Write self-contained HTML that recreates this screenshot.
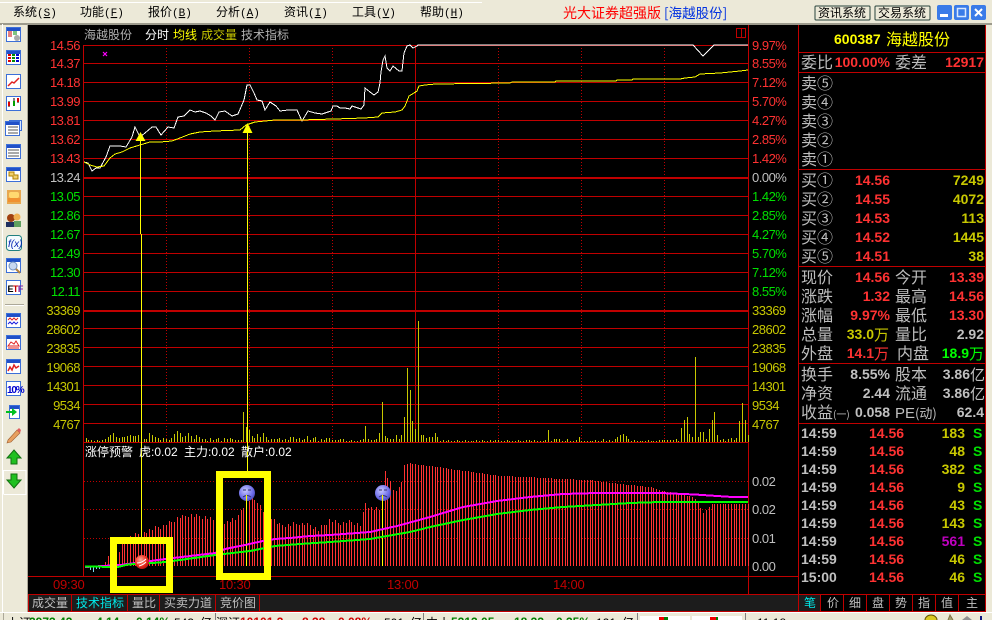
<!DOCTYPE html>
<html><head><meta charset="utf-8"><title>光大证券超强版</title>
<style>
html,body{margin:0;padding:0;width:992px;height:620px;overflow:hidden;background:#ece9d8}
svg{display:block;position:absolute;left:0;top:0}
text{font-family:"Liberation Sans","WenQuanYi Zen Hei","Noto Sans CJK SC",sans-serif;white-space:pre}
.cn{font-family:"WenQuanYi Zen Hei","Noto Sans CJK SC",sans-serif}
.ci{font-family:"Noto Sans CJK SC",sans-serif}
.ax{font-size:13px;letter-spacing:-.5px}
.lb{font-size:16px;fill:#bdbdbd;font-family:"WenQuanYi Zen Hei","Noto Sans CJK SC",sans-serif}
.nb{font-size:14px;font-weight:bold;text-anchor:end}
.tk{font-size:14px;font-weight:bold}
.r{fill:#ff3232}.y{fill:#c8c800}.g{fill:#00e000}.w{fill:#c0c0c0}.gg{fill:#00ff00}
.menu{font-size:12px;fill:#000;font-family:"WenQuanYi Zen Hei","Noto Sans CJK SC",sans-serif}
.mn{font-family:"Liberation Mono",monospace;font-size:11px}
.tab{font-size:12px;fill:#c0c0c0;font-family:"WenQuanYi Zen Hei","Noto Sans CJK SC",sans-serif}
.hd{font-size:12px;font-family:"WenQuanYi Zen Hei","Noto Sans CJK SC",sans-serif}
.st{font-size:12px;font-weight:bold}
</style></head><body>
<svg width="992" height="620" viewBox="0 0 992 620" xmlns="http://www.w3.org/2000/svg">
<defs>
<g id="box"><rect x="6.5" y="-7.5" width="14" height="14" fill="#fff" stroke="#3c6fd8"/><rect x="7" y="-7" width="13" height="3" fill="#2050c8"/></g>
</defs>
<rect width="992" height="620" fill="#ece9d8"/>
<rect x="0" y="2" width="482" height="1" fill="#fff"/>
<rect x="0" y="23" width="992" height="2" fill="#9c9a8c"/>
<rect x="27" y="24" width="1" height="590" fill="#aca899"/>
<rect x="2" y="24" width="1" height="590" fill="#fff"/>
<rect x="28" y="25" width="958" height="588" fill="#000"/>

<!-- menu -->
<text class="menu" x="13" y="16">系统<tspan class="mn">(<tspan text-decoration="underline">S</tspan>)</tspan></text>
<text class="menu" x="80" y="16">功能<tspan class="mn">(<tspan text-decoration="underline">F</tspan>)</tspan></text>
<text class="menu" x="148" y="16">报价<tspan class="mn">(<tspan text-decoration="underline">B</tspan>)</tspan></text>
<text class="menu" x="216" y="16">分析<tspan class="mn">(<tspan text-decoration="underline">A</tspan>)</tspan></text>
<text class="menu" x="284" y="16">资讯<tspan class="mn">(<tspan text-decoration="underline">I</tspan>)</tspan></text>
<text class="menu" x="352" y="16">工具<tspan class="mn">(<tspan text-decoration="underline">V</tspan>)</tspan></text>
<text class="menu" x="420" y="16">帮助<tspan class="mn">(<tspan text-decoration="underline">H</tspan>)</tspan></text>
<text class="cn" x="563" y="18" font-size="14" fill="#ff0000">光大证券超强版</text>
<text class="cn" x="664" y="18" font-size="13.5" fill="#0030e0">[海越股份]</text>
<rect x="815" y="6" width="55" height="14" rx="1" fill="#ece9d8" stroke="#27443c"/>
<rect x="875" y="6" width="55" height="14" rx="1" fill="#ece9d8" stroke="#27443c"/>
<text class="menu" x="818" y="17">资讯系统</text>
<text class="menu" x="878" y="17">交易系统</text>
<rect x="937" y="5" width="15" height="15" rx="2" fill="#3a7be8"/><rect x="940" y="14" width="8" height="3" fill="#fff"/>
<rect x="954" y="5" width="15" height="15" rx="2" fill="#3a7be8"/><rect x="957.5" y="8.5" width="8" height="8" fill="none" stroke="#d8e8ff" stroke-width="1.5"/>
<rect x="971" y="5" width="15" height="15" rx="2" fill="#3a7be8"/><path d="M975 9l7 7M982 9l-7 7" stroke="#fff" stroke-width="2"/>

<!-- toolbar icons -->
<g transform="translate(0,35)"><use href="#box"/><path d="M8 -3h4M8 -1h4M8 1h4" stroke="#c00"/><path d="M13 -3h4M13 -1h4" stroke="#080"/><circle cx="17" cy="3" r="3" fill="#aaa"/></g>
<g transform="translate(0,58)"><use href="#box"/><path d="M8 -3h3M8 0h3M8 3h3" stroke="#d00" stroke-width="2"/><path d="M12 -3h3M12 0h3M12 3h3" stroke="#080" stroke-width="2"/><path d="M16 -3h3M16 0h3M16 3h3" stroke="#00c" stroke-width="2"/></g>
<g transform="translate(0,82)"><rect x="6.5" y="-7.5" width="14" height="14" fill="#fff" stroke="#3c6fd8"/><path d="M8 4l4-4 2 1 5-5" fill="none" stroke="#e02020" stroke-width="1.5"/></g>
<g transform="translate(0,104)"><rect x="6.5" y="-7.5" width="14" height="14" fill="#fff" stroke="#3c6fd8"/><path d="M9 -3v6M14 -6v8M18 -6v5" stroke="#000"/><rect x="8" y="-2" width="2" height="4" fill="#e00000"/><rect x="13" y="-3" width="2" height="5" fill="#00a000"/><rect x="17" y="-6" width="2" height="4" fill="#e00000"/></g>
<g transform="translate(0,128)"><rect x="9.5" y="-7.5" width="12" height="10" fill="#d8e8ff" stroke="#3c6fd8"/><use href="#box" y="1" x="-1"/><path d="M8 -1h10M8 2h10M8 5h10" stroke="#555"/></g>
<g transform="translate(0,152)"><use href="#box"/><path d="M8 -2h11M8 1h11M8 4h11" stroke="#555"/></g>
<g transform="translate(0,175)"><use href="#box"/><path d="M9 -3h5v3h4v4h-5v-3h-4z" fill="#f0d070" stroke="#b08000"/></g>
<g transform="translate(0,197)"><rect x="7" y="-7" width="14" height="14" fill="#e8a850"/><rect x="9" y="-5" width="10" height="6" rx="2" fill="#ffd870"/><rect x="8" y="1" width="12" height="4" fill="#f09030"/></g>
<g transform="translate(0,220)"><circle cx="11" cy="-2" r="4" fill="#a04010"/><rect x="6" y="2" width="9" height="5" fill="#203060"/><circle cx="17" cy="-3" r="3.5" fill="#f0b050"/><rect x="14" y="1" width="7" height="6" fill="#60a060"/></g>
<g transform="translate(0,243)"><rect x="6.5" y="-7.5" width="15" height="15" rx="3" fill="#f4fbff" stroke="#208080"/><text x="8" y="4" font-size="10" font-style="italic" fill="#0020b0" font-family="Liberation Serif">f(x)</text></g>
<g transform="translate(0,266)"><use href="#box"/><circle cx="13" cy="0" r="4" fill="#c8d8f0" stroke="#7090c0"/><path d="M16 3l4 4" stroke="#b08040" stroke-width="2"/></g>
<g transform="translate(0,288)"><rect x="6.5" y="-7.5" width="14" height="14" fill="#fff" stroke="#3c6fd8"/><text x="7.5" y="4" font-size="9" font-weight="bold" fill="#000" letter-spacing="-.6">E<tspan fill="#c00000">T</tspan><tspan fill="#8020a0">F</tspan></text></g>
<rect x="5" y="304" width="19" height="1" fill="#aca899"/><rect x="5" y="305" width="19" height="1" fill="#fff"/>
<g transform="translate(0,321)"><use href="#box"/><path d="M8 -1l2-2 2 2 2-2 2 2 2-2" fill="none" stroke="#e02020"/><path d="M8 3l2-2 2 2 2-2 2 2 2-2" fill="none" stroke="#2020e0"/></g>
<g transform="translate(0,343)"><use href="#box"/><path d="M8 3l3-4 3 2 2-3 3 5z" fill="none" stroke="#e02020"/><path d="M8 5h11" stroke="#e02020"/></g>
<g transform="translate(0,367)"><use href="#box"/><path d="M8 4l2-4 2 3 2-5 2 3 3-2" fill="none" stroke="#e02020" stroke-width="1.5"/></g>
<g transform="translate(0,389)"><rect x="6.5" y="-7.5" width="14" height="14" fill="#fff" stroke="#3c6fd8"/><text x="7" y="4" font-size="10" font-weight="bold" fill="#0000d0" letter-spacing="-1.2">10%</text></g>
<g transform="translate(0,412)"><rect x="9.5" y="-6.5" width="10" height="13" fill="#fff" stroke="#3c6fd8"/><rect x="10" y="-6" width="9" height="3" fill="#2050c8"/><path d="M6 -1h6v-3l5 4-5 4v-3h-6z" fill="#00c020"/></g>
<path d="M8 440l9-10 3 3-9 9-4 1z" fill="#e8a060" stroke="#a06030" stroke-width=".6"/><path d="M17 430l3 3 1-3-2-2z" fill="#e06060"/>
<path d="M14 450l7 8h-4v6h-6v-6h-4z" fill="#20c020" stroke="#107010"/>
<path d="M3.5 494V470.5H26M3.5 494.5H26V470" fill="none" stroke="#fff" shape-rendering="crispEdges"/>
<path d="M14 488l7-8h-4v-6h-6v6h-4z" transform="translate(0,0)" fill="#20c020" stroke="#107010"/>

<!-- grid -->
<g shape-rendering="crispEdges" fill="none" stroke="#c00000">
<path d="M84 45.5H748M84 63.5H748M84 82.5H748M84 101.5H748M84 120.5H748M84 139.5H748M84 158.5H748M84 196.5H748M84 215.5H748M84 234.5H748M84 253.5H748M84 272.5H748M84 291.5H748M84 328.5H748M84 347.5H748M84 366.5H748M84 385.5H748M84 404.5H748M84 423.5H748M84 442.5H748"/>
<path d="M84 178H748M84 311H748" stroke-width="2"/>
<path d="M83.5 45V576M748.5 25V594M798.5 25V611M415.5 45V442M985.5 25V611"/>
<path d="M166.5 45V442M249.5 45V442M332.5 45V442M498.5 45V442M581.5 45V442M664.5 45V442" stroke-dasharray="1 2"/>
<path d="M84 481.5H748M84 509.5H748M84 538.5H748" stroke-dasharray="1 2"/>
<path d="M28 576.5H798M28 594.5H798M798 52.5H985M798 72.5H985M798 169.5H985M798 266.5H985M798 363.5H985M798 423.5H985"/>
</g>

<!-- tabs -->
<rect x="29" y="595" width="769" height="16" fill="#1c1c1c"/>
<g shape-rendering="crispEdges" fill="none" stroke="#c00000">
<path d="M28.5 594V611M71.5 594V611M127.5 594V611M159.5 594V611M215.5 594V611M259.5 594V611M28 611.5H986M798 594.5H986M820.5 594V611M843.5 594V611M866.5 594V611M889.5 594V611M912.5 594V611M935.5 594V611M958.5 594V611"/>
</g>
<rect x="799" y="595" width="21" height="16" fill="#1c1c1c"/>
<text class="tab" x="32" y="607">成交量</text>
<text class="tab" x="76" y="607" style="fill:#00e8e8">技术指标</text>
<text class="tab" x="132" y="607">量比</text>
<text class="tab" x="164" y="607">买卖力道</text>
<text class="tab" x="220" y="607">竞价图</text>
<text class="tab" x="804" y="607" style="fill:#00e8e8">笔</text>
<text class="tab" x="827" y="607">价</text>
<text class="tab" x="849" y="607">细</text>
<text class="tab" x="872" y="607">盘</text>
<text class="tab" x="895" y="607">势</text>
<text class="tab" x="918" y="607">指</text>
<text class="tab" x="941" y="607">值</text>
<text class="tab" x="966" y="607">主</text>

<!-- left axis -->
<g class="ax" text-anchor="end">
<text class="r" x="80" y="50">14.56</text><text class="r" x="80" y="68">14.37</text><text class="r" x="80" y="87">14.18</text><text class="r" x="80" y="106">13.99</text><text class="r" x="80" y="125">13.81</text><text class="r" x="80" y="144">13.62</text><text class="r" x="80" y="163">13.43</text>
<text class="w" x="80" y="182">13.24</text>
<text class="g" x="80" y="201">13.05</text><text class="g" x="80" y="220">12.86</text><text class="g" x="80" y="239">12.67</text><text class="g" x="80" y="258">12.49</text><text class="g" x="80" y="277">12.30</text><text class="g" x="80" y="296">12.11</text>
<text class="y" x="80" y="315">33369</text><text class="y" x="80" y="334">28602</text><text class="y" x="80" y="353">23835</text><text class="y" x="80" y="372">19068</text><text class="y" x="80" y="391">14301</text><text class="y" x="80" y="410">9534</text><text class="y" x="80" y="429">4767</text>
</g>
<!-- right axis -->
<g class="ax">
<text class="r" x="752" y="50">9.97%</text><text class="r" x="752" y="68">8.55%</text><text class="r" x="752" y="87">7.12%</text><text class="r" x="752" y="106">5.70%</text><text class="r" x="752" y="125">4.27%</text><text class="r" x="752" y="144">2.85%</text><text class="r" x="752" y="163">1.42%</text>
<text class="w" x="752" y="182">0.00%</text>
<text class="g" x="752" y="201">1.42%</text><text class="g" x="752" y="220">2.85%</text><text class="g" x="752" y="239">4.27%</text><text class="g" x="752" y="258">5.70%</text><text class="g" x="752" y="277">7.12%</text><text class="g" x="752" y="296">8.55%</text>
<text class="y" x="752" y="315">33369</text><text class="y" x="752" y="334">28602</text><text class="y" x="752" y="353">23835</text><text class="y" x="752" y="372">19068</text><text class="y" x="752" y="391">14301</text><text class="y" x="752" y="410">9534</text><text class="y" x="752" y="429">4767</text>
<text class="w" x="752" y="486">0.02</text><text class="w" x="752" y="514">0.02</text><text class="w" x="752" y="543">0.01</text><text class="w" x="752" y="571">0.00</text>
</g>

<!-- header -->
<text class="hd" x="84" y="39" fill="#b0b0b0">海越股份</text>
<text class="hd" x="145" y="39" fill="#fff">分时</text>
<text class="hd" x="173" y="39" fill="#ffff00">均线</text>
<text class="hd" x="201" y="39" fill="#c8c800">成交量</text>
<text class="hd" x="241" y="39" fill="#b0b0b0">技术指标</text>
<rect x="736.5" y="28.5" width="9" height="9" fill="none" stroke="#c00000" shape-rendering="crispEdges"/><path d="M741.5 28v10" stroke="#c00000" shape-rendering="crispEdges"/>
<path d="M103 52l4 4M107 52l-4 4" stroke="#ff00ff" stroke-width="1.2"/>

<!-- volume / indicator bars -->
<path id="vol" d="" stroke="#c8c800" fill="none" shape-rendering="crispEdges"/>
<path id="ind" d="" stroke="#ff3232" fill="none" shape-rendering="crispEdges"/>
<path d="M90.5 566v4M93.5 566v6M96.5 566v3M99.5 566v3" stroke="#80d8f0" shape-rendering="crispEdges"/>

<!-- price lines -->
<polyline fill="none" stroke="#fff" stroke-width="1" shape-rendering="crispEdges" points="84,162 88,163 92,171 96,168 100,168 106,157 110,146 120,146 126,147 132,137 135,127 140,137 145,133 152,127 156,127 161,135 168,127 174,128 178,117 184,116 190,110 195,112 200,111 206,113 211,116 215,120 219,112 225,111 232,116 238,114 244,100 247,85 250,85 254,93 257,100 262,101 265,110 270,102 276,106 280,111 288,110 297,110 302,121 308,111 315,113 322,114 331,111 333,106 337,106 340,108 345,108 350,109 352,106 358,108 361,109 364,105 365,88 370,92 374,95 378,92 380,83 381,72 383,60 385,56 387,68 390,71 393,66 399,71 402,71 404,53 407,46 410,45 413,48 417,46 418,45 693,45 703,56 714,45 748,45"/>
<polyline fill="none" stroke="#ffff00" stroke-width="1" shape-rendering="crispEdges" points="84,162 90,165 97,167 104,166 110,158 115,154 122,152 130,148 140,145 150,142 160,142 172,141 180,138 190,134 200,132 215,131 240,130 246,125 255,122 275,120 300,120 334,119 364,118 378,117 382,113 395,112 402,110 405,106 409,96 414,93 417,91 419,86 425,85 436,84 510,83 512,82 555,82 556,81 616,81 617,80 632,80 633,79 680,79 685,78 695,77 700,74 720,73 740,71 748,70"/>

<!-- arrows -->
<path d="M140.5 141V234M141.5 234V537M247.5 133V471M246.5 495V566M382.5 494V566" stroke="#ffff00" fill="none" shape-rendering="crispEdges"/>
<path d="M140.5 132l5 9h-10zM247.5 123l5 10h-10z" fill="#ffff00"/>

<!-- indicator lines -->
<polyline fill="none" stroke="#ff00ff" stroke-width="2" shape-rendering="crispEdges" points="85,567 120,565 150,561 165,559 190,556 215,553 225,549 245,545 263,541 275,539 290,538 310,536 330,535 370,532 397,526 430,517 463,507 497,501 530,497 563,494 597,493 660,493 695,494.5 732,497 748,497"/>
<polyline fill="none" stroke="#00ff00" stroke-width="2" shape-rendering="crispEdges" points="85,566.5 118,567 128,564.5 160,562.5 180,560 215,555 250,551 275,546 300,544 330,542 370,539 410,532 430,527 463,520 497,514 530,510 563,507 597,505 630,503 660,502 748,502"/>

<!-- yellow boxes -->
<g fill="none" stroke="#ffff00" stroke-width="7" shape-rendering="crispEdges">
<rect x="113.5" y="540.5" width="56" height="49"/>
<rect x="219.5" y="474.5" width="48" height="102"/>
</g>
<!-- time -->
<g font-size="13" fill="#c00000" letter-spacing="-.2"><text x="53" y="589">09:30</text><text x="219" y="589">10:30</text><text x="387" y="589">13:00</text><text x="553" y="589">14:00</text></g>
<!-- faces and ball -->
<defs><radialGradient id="fc" cx=".4" cy=".35" r=".7"><stop offset="0" stop-color="#c8c8ff"/><stop offset=".7" stop-color="#6a6ae8"/><stop offset="1" stop-color="#4848b0"/></radialGradient>
<radialGradient id="bl" cx=".4" cy=".35" r=".7"><stop offset="0" stop-color="#ffb0a0"/><stop offset=".6" stop-color="#f03020"/><stop offset="1" stop-color="#b01010"/></radialGradient></defs>
<g id="f1"><circle cx="247" cy="493" r="8" fill="url(#fc)"/><path d="M243 490h3M248 490h3M243 497q4-3 8 0" stroke="#30306a" fill="none"/><path d="M246.5 495V502" stroke="#ffff00"/></g>
<g><circle cx="383" cy="493" r="8" fill="url(#fc)"/><path d="M379 490h3M384 490h3M379 497q4-3 8 0" stroke="#30306a" fill="none"/><path d="M382.5 495V502" stroke="#ffff00"/></g>
<circle cx="142" cy="562" r="7" fill="url(#bl)"/><path d="M137 563q5 0 9-4M139 566q4-1 7-4" stroke="#fff" fill="none"/>

<!-- indicator title -->
<text class="hd" x="85" y="456" fill="#fff">涨停预警</text>
<text x="139" y="456" font-size="12" fill="#fff"><tspan class="cn">虎</tspan>:0.02</text>
<text x="184" y="456" font-size="12" fill="#fff"><tspan class="cn">主力</tspan>:0.02</text>
<text x="241" y="456" font-size="12" fill="#fff"><tspan class="cn">散户</tspan>:0.02</text>

<!-- right panel -->
<text x="834" y="44" font-size="14" font-weight="bold" fill="#ffff00">600387</text>
<text class="cn" x="886" y="45" font-size="16" fill="#ffff00">海越股份</text>
<text class="lb" x="801" y="68">委比</text><text class="nb r" x="890" y="67">100.00%</text><text class="lb" x="895" y="68">委差</text><text class="nb r" x="984" y="67">12917</text>
<text class="lb" x="801" y="89">卖<tspan class="ci">⑤</tspan></text><text class="lb" x="801" y="108">卖<tspan class="ci">④</tspan></text><text class="lb" x="801" y="127">卖<tspan class="ci">③</tspan></text><text class="lb" x="801" y="146">卖<tspan class="ci">②</tspan></text><text class="lb" x="801" y="165">卖<tspan class="ci">①</tspan></text>
<text class="lb" x="801" y="186">买<tspan class="ci">①</tspan></text><text class="nb r" x="890" y="185">14.56</text><text class="nb y" x="984" y="185">7249</text>
<text class="lb" x="801" y="205">买<tspan class="ci">②</tspan></text><text class="nb r" x="890" y="204">14.55</text><text class="nb y" x="984" y="204">4072</text>
<text class="lb" x="801" y="224">买<tspan class="ci">③</tspan></text><text class="nb r" x="890" y="223">14.53</text><text class="nb y" x="984" y="223">113</text>
<text class="lb" x="801" y="243">买<tspan class="ci">④</tspan></text><text class="nb r" x="890" y="242">14.52</text><text class="nb y" x="984" y="242">1445</text>
<text class="lb" x="801" y="262">买<tspan class="ci">⑤</tspan></text><text class="nb r" x="890" y="261">14.51</text><text class="nb y" x="984" y="261">38</text>
<text class="lb" x="801" y="283">现价</text><text class="nb r" x="890" y="282">14.56</text><text class="lb" x="895" y="283">今开</text><text class="nb r" x="984" y="282">13.39</text>
<text class="lb" x="801" y="302">涨跌</text><text class="nb r" x="890" y="301">1.32</text><text class="lb" x="895" y="302">最高</text><text class="nb r" x="984" y="301">14.56</text>
<text class="lb" x="801" y="321">涨幅</text><text class="nb r" x="890" y="320">9.97%</text><text class="lb" x="895" y="321">最低</text><text class="nb r" x="984" y="320">13.30</text>
<text class="lb" x="801" y="340">总量</text><text class="nb y" x="874" y="339">33.0</text><text class="cn" x="874" y="340" font-size="15" fill="#c8c800">万</text><text class="lb" x="895" y="340">量比</text><text class="nb w" x="984" y="339">2.92</text>
<text class="lb" x="801" y="359">外盘</text><text class="nb r" x="874" y="358">14.1</text><text class="cn" x="874" y="359" font-size="15" fill="#ff3232">万</text><text class="lb" x="897" y="359">内盘</text><text class="nb gg" x="969" y="358">18.9</text><text class="cn" x="969" y="359" font-size="15" fill="#00ff00">万</text>
<text class="lb" x="801" y="380">换手</text><text class="nb w" x="890" y="379">8.55%</text><text class="lb" x="895" y="380">股本</text><text class="nb w" x="970" y="379">3.86</text><text class="cn" x="970" y="380" font-size="15" fill="#c0c0c0">亿</text>
<text class="lb" x="801" y="399">净资</text><text class="nb w" x="890" y="398">2.44</text><text class="lb" x="895" y="399">流通</text><text class="nb w" x="970" y="398">3.86</text><text class="cn" x="970" y="399" font-size="15" fill="#c0c0c0">亿</text>
<text class="lb" x="801" y="418">收益<tspan font-size="10">(一)</tspan></text><text class="nb w" x="890" y="417">0.058</text><text x="895" y="418" font-size="15" fill="#c0c0c0">PE<tspan class="cn" font-size="13">(动)</tspan></text><text class="nb w" x="984" y="417">62.4</text>

<!-- ticks -->
<g>
<text class="tk w" x="801" y="438">14:59</text><text class="tk r" x="869" y="438">14.56</text><text class="nb y" x="965" y="438">183</text><text class="tk g" x="973" y="438">S</text>
<text class="tk w" x="801" y="456">14:59</text><text class="tk r" x="869" y="456">14.56</text><text class="nb y" x="965" y="456">48</text><text class="tk g" x="973" y="456">S</text>
<text class="tk w" x="801" y="474">14:59</text><text class="tk r" x="869" y="474">14.56</text><text class="nb y" x="965" y="474">382</text><text class="tk g" x="973" y="474">S</text>
<text class="tk w" x="801" y="492">14:59</text><text class="tk r" x="869" y="492">14.56</text><text class="nb y" x="965" y="492">9</text><text class="tk g" x="973" y="492">S</text>
<text class="tk w" x="801" y="510">14:59</text><text class="tk r" x="869" y="510">14.56</text><text class="nb y" x="965" y="510">43</text><text class="tk g" x="973" y="510">S</text>
<text class="tk w" x="801" y="528">14:59</text><text class="tk r" x="869" y="528">14.56</text><text class="nb y" x="965" y="528">143</text><text class="tk g" x="973" y="528">S</text>
<text class="tk w" x="801" y="546">14:59</text><text class="tk r" x="869" y="546">14.56</text><text class="nb" x="965" y="546" fill="#c000c0">561</text><text class="tk g" x="973" y="546">S</text>
<text class="tk w" x="801" y="564">14:59</text><text class="tk r" x="869" y="564">14.56</text><text class="nb y" x="965" y="564">46</text><text class="tk g" x="973" y="564">S</text>
<text class="tk w" x="801" y="582">15:00</text><text class="tk r" x="869" y="582">14.56</text><text class="nb y" x="965" y="582">46</text><text class="tk g" x="973" y="582">S</text>
</g>

<!-- status bar (clipped at bottom) -->
<rect x="0" y="612" width="992" height="8" fill="#ece9d8"/>
<rect x="0" y="612" width="992" height="1" fill="#fff"/>
<rect x="3" y="613" width="1" height="7" fill="#aca899"/>
<g>
<text x="7" y="627" font-size="12" fill="#000" class="cn">上证</text>
<text x="29" y="626" fill="#008000" font-size="12" font-weight="bold">2973.43</text>
<text x="92" y="626" fill="#008000" font-size="12" font-weight="bold">-4.14</text>
<text x="132" y="626" fill="#008000" font-size="12" font-weight="bold">-0.14%</text>
<text x="174" y="627" fill="#000" font-size="12">543</text><text class="cn" x="200" y="627" font-size="12" fill="#000">亿</text>
<text class="cn" x="216" y="627" font-size="12" fill="#000">深证</text>
<text x="240" y="626" fill="#d00000" font-size="12" font-weight="bold">10101.3</text>
<text x="302" y="626" fill="#d00000" font-size="12" font-weight="bold">8.38</text>
<text x="338" y="626" fill="#d00000" font-size="12" font-weight="bold">0.08%</text>
<text x="384" y="627" fill="#000" font-size="12">501</text><text class="cn" x="410" y="627" font-size="12" fill="#000">亿</text>
<text class="cn" x="426" y="627" font-size="12" fill="#000">中小</text>
<text x="451" y="626" fill="#008000" font-size="12" font-weight="bold">5213.05</text>
<text x="510" y="626" fill="#008000" font-size="12" font-weight="bold">-18.33</text>
<text x="552" y="626" fill="#008000" font-size="12" font-weight="bold">-0.35%</text>
<text x="596" y="627" fill="#000" font-size="12">121</text><text class="cn" x="622" y="627" font-size="12" fill="#000">亿</text>
<text x="757" y="627" fill="#000" font-size="12">11:18</text>
</g>
<g shape-rendering="crispEdges">
<rect x="215" y="613" width="1" height="7" fill="#808080"/><rect x="423" y="613" width="1" height="7" fill="#808080"/><rect x="637" y="613" width="1" height="7" fill="#808080"/><rect x="745" y="613" width="1" height="7" fill="#808080"/>
<rect x="640" y="616" width="50" height="4" fill="#fff"/><rect x="692" y="616" width="50" height="4" fill="#fff"/>
<rect x="659" y="617" width="5" height="3" fill="#f00000"/><rect x="664" y="617" width="4" height="3" fill="#008000"/>
<rect x="710" y="617" width="6" height="3" fill="#f00000"/><rect x="716" y="617" width="2" height="3" fill="#008000"/>
</g>
<ellipse cx="931" cy="620" rx="6" ry="5" fill="#d8c820" stroke="#605000"/>
<path d="M948 620l2-5 3 5" fill="#a0a070" stroke="#807040"/>
<path d="M962 620l5-4 5 4z" fill="#909090"/>
<rect x="980" y="616" width="2" height="4" fill="#101880"/>
</svg>
<script>
var v=[4,2,2,1,2,1,2,3,5,7,9,5,4,5,5,6,7,6,6,7,6,3,3,9,7,5,4,2,4,3,2,4,8,11,9,5,6,9,6,3,7,5,3,3,1,4,2,3,4,1,4,3,4,3,2,2,2,30,15,12,6,4,8,5,9,5,2,3,3,3,4,2,
3,2,5,5,3,4,2,3,6,2,4,5,1,3,2,4,4,
2,2,2,3,3,1,1,2,1,1,2,3,16,3,2,2,3,9,40,6,4,3,3,7,3,7,25,74,52,21,13,121,7,7,4,5,5,9,5,1,
2,1,2,1,1,2,1,1,2,1,1,1,2,1,2,1,1,2,1,2,2,1,1,2,1,1,1,2,1,1,2,2,1,2,1,1,1,2,12,1,3,3,3,1,1,3,1,1,2,5,1,1,1,1,1,2,1,1,3,1,2,1,3,5,7,8,6,3,1,2,1,1,1,1,2,1,1,1,
2,2,2,2,2,2,3,1,14,22,25,8,5,85,5,10,10,3,13,22,30,7,2,3,1,3,4,2,4,21,39,22,7];
var P=[[85,566],[104,565],[107,555],[112,563],[118,552],[126,540],[132,535],[150,530],[165,525],[178,518],[190,515],[205,517],[215,520],[222,530],[228,520],[238,518],[243,506],[251,498],[258,501],[263,511],[270,516],[280,525],[290,525],[300,523],[310,525],[318,530],[330,520],[340,523],[350,522],[362,525],[365,503],[372,508],[380,510],[384,478],[385,471],[390,482],[393,490],[400,488],[404,468],[408,463],[420,465],[440,467],[450,469],[480,473],[500,476],[530,477],[560,479],[590,480],[620,484],[650,487],[660,490],[690,496],[697,500],[703,513],[708,508],[712,504],[748,504]];
function top_(x){for(var i=1;i<P.length;i++){if(x<=P[i][0]){var a=P[i-1],b=P[i];return a[1]+(b[1]-a[1])*(x-a[0])/(b[0]-a[0]);}}return 504;}
var d="",e="";
for(var i=0;i<240;i++){var x=Math.round(85.5+i*2.77)+.5;var h=v[i]||1;d+="M"+x+" 442v-"+h;var t=Math.round(top_(x)+(x<405?((i*7)%5-2):0));if(x>104)e+="M"+x+" 566V"+t;}
document.getElementById("vol").setAttribute("d",d);
document.getElementById("ind").setAttribute("d",e);
</script>
</body></html>
